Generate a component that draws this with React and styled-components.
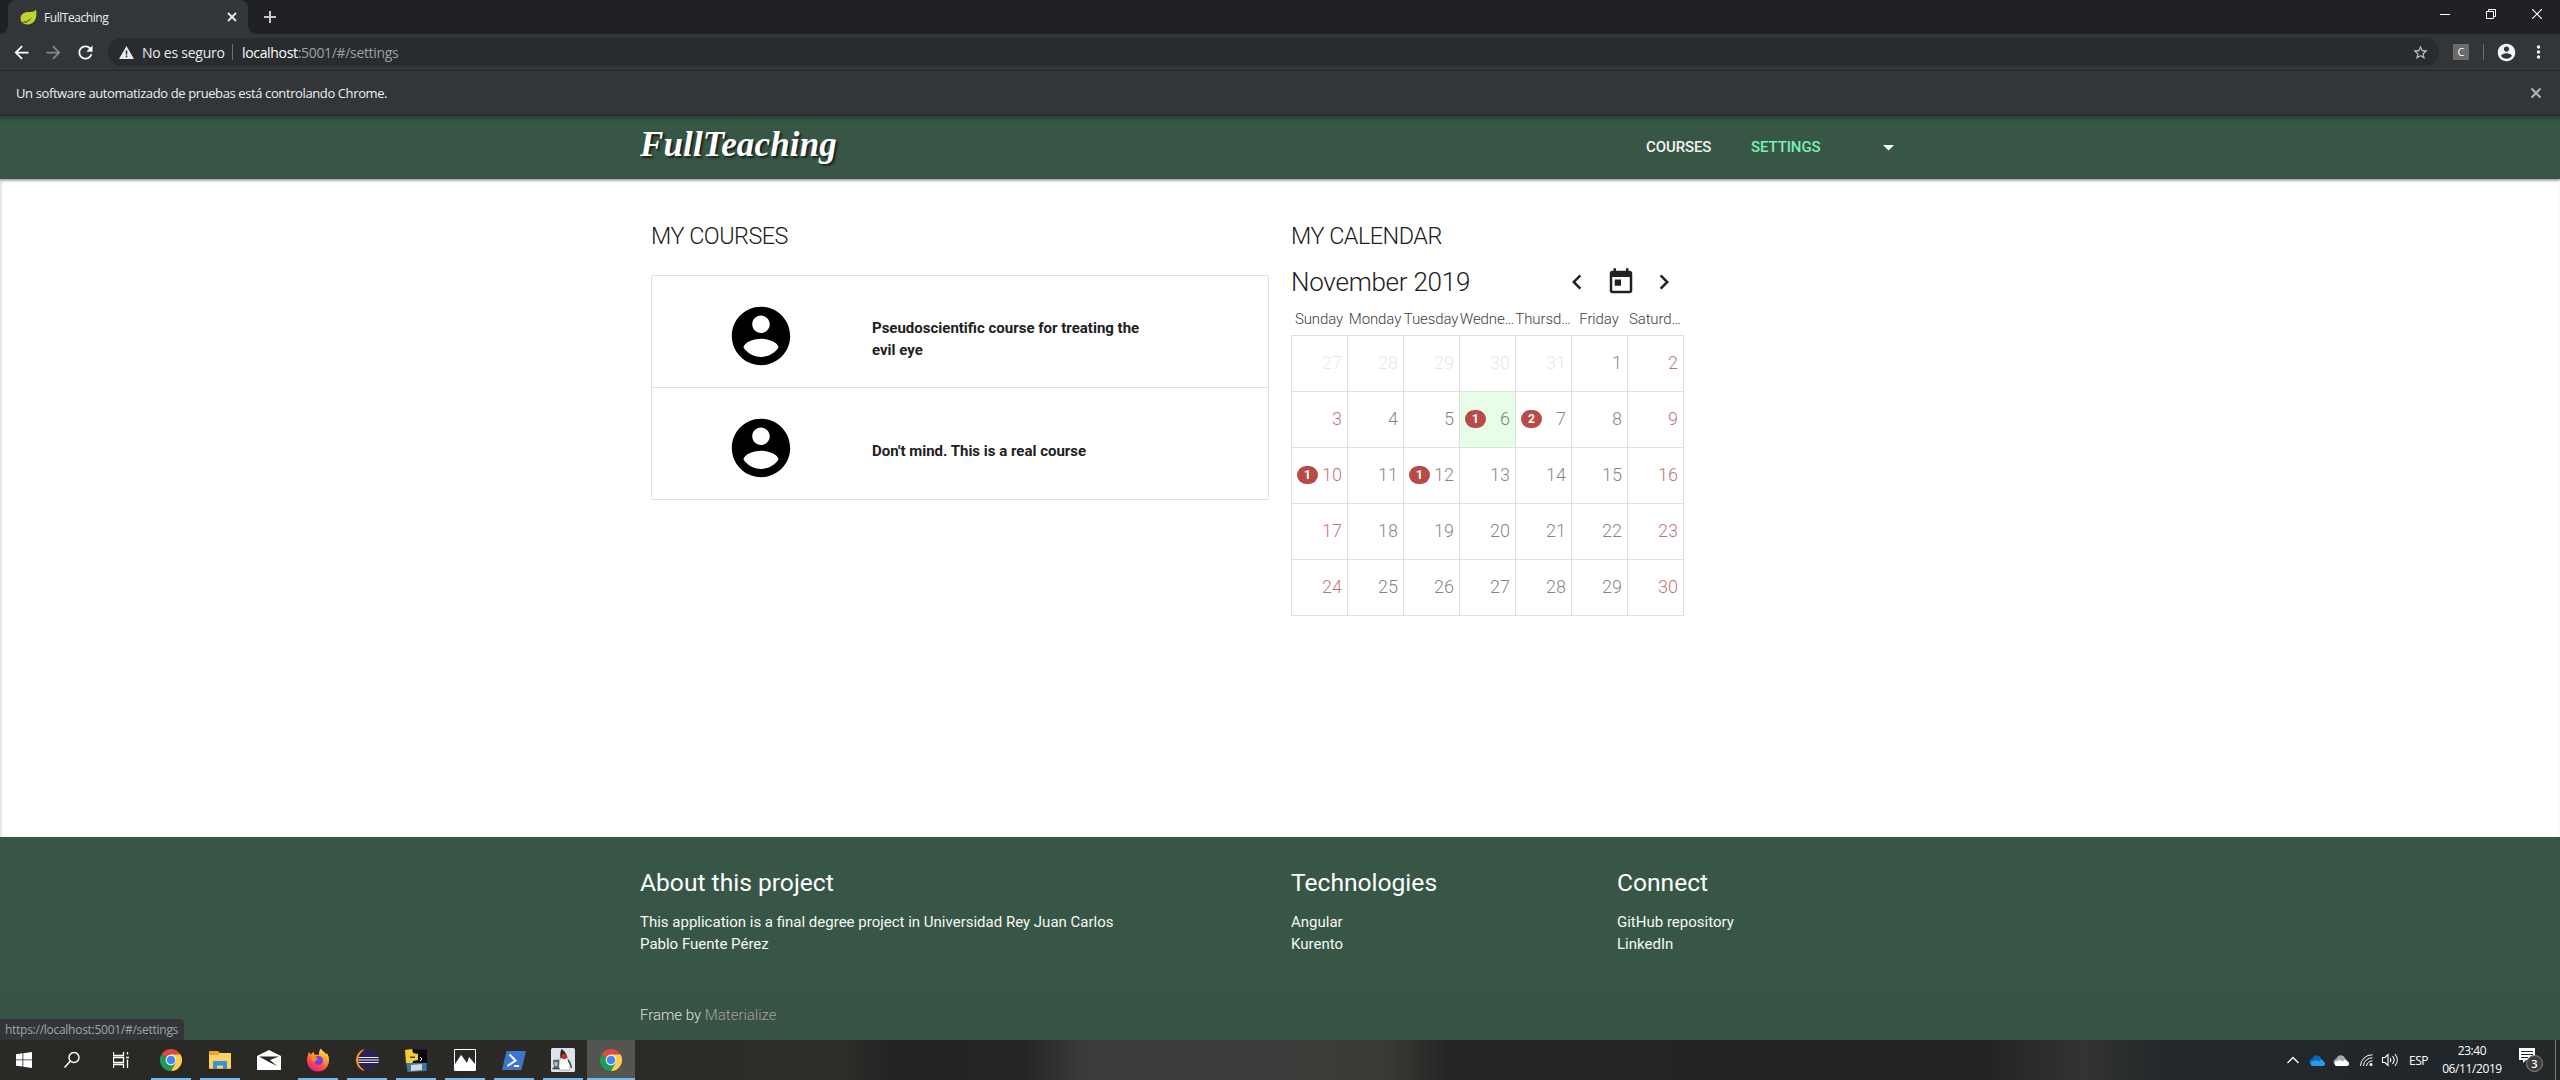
import React from "react";
import styled, { createGlobalStyle, css } from "styled-components";

const GlobalStyle = createGlobalStyle`
  * { box-sizing: border-box; }
  body { margin: 0; background: #fff; font-family: Roboto, sans-serif; }
  svg { display: block; flex: none; }
`;

const UI_FONT = `"Open Sans", "Noto Sans", sans-serif`;

const Screen = styled.div`
  width: 2560px;
  height: 1080px;
  display: flex;
  flex-direction: column;
  overflow: hidden;
  background: #fff;
`;

/* ---------- Browser chrome ---------- */

const TabStrip = styled.div`
  height: 34px;
  flex: none;
  background: #202124;
  display: flex;
  align-items: flex-start;
  padding-left: 8px;
`;

const Tab = styled.div`
  position: relative;
  width: 240px;
  height: 34px;
  display: flex;
  align-items: center;
  padding: 0 11px 0 12px;
  background: #323639;
  border-radius: 8px 8px 0 0;
  color: #eceef0;
  font: 12px ${UI_FONT};
  &::before, &::after {
    content: "";
    position: absolute;
    bottom: 0;
    width: 8px;
    height: 8px;
  }
  &::before { left: -8px; background: radial-gradient(circle at 0 0, #202124 7.5px, #323639 8px); }
  &::after { right: -8px; background: radial-gradient(circle at 100% 0, #202124 7.5px, #323639 8px); }
`;

const TabTitle = styled.span`
  flex: 1;
  margin-left: 7px;
  letter-spacing: -0.45px;
`;

const NewTab = styled.div`
  padding: 11px 0 0 16px;
`;

const WindowButtons = styled.div`
  margin-left: auto;
  display: flex;
  gap: 36px;
  padding: 9px 18px 0 0;
`;

const Toolbar = styled.div`
  height: 37px;
  flex: none;
  display: flex;
  align-items: center;
  background: #323639;
  border-bottom: 1px solid #25282a;
  padding: 0 16px 0 11px;
`;

const NavIcons = styled.div`
  display: flex;
  gap: 11px;
  margin-right: 12px;
`;

const AddressBar = styled.div`
  flex: 1;
  height: 28px;
  border-radius: 14px;
  background: #282c2f;
  display: flex;
  align-items: center;
  padding: 0 10px 0 11px;
  font: 14px ${UI_FONT};
  color: #e8eaed;
`;

const Insecure = styled.span`
  margin-left: 8px;
  width: 82px;
  letter-spacing: -0.25px;
  white-space: nowrap;
`;

const Bar = styled.span`
  width: 1px;
  height: 16px;
  background: #6b6f73;
  margin: 0 ${(p) => p.$right}px 0 ${(p) => p.$left}px;
`;

const Url = styled.span`
  flex: 1;
  letter-spacing: -0.33px;
  color: #9aa0a6;
  b { font-weight: 400; color: #fff; }
`;

const Extension = styled.span`
  width: 16px;
  height: 16px;
  margin-left: 14px;
  border-radius: 1px;
  background: #6b6b6b;
  color: #fff;
  font: 11px/16px ${UI_FONT};
  text-align: center;
`;

const InfoBar = styled.div`
  height: 45px;
  flex: none;
  display: flex;
  align-items: center;
  justify-content: space-between;
  background: #323639;
  border-bottom: 1px solid #2b2f31;
  padding: 0 18px 0 16px;
  color: #eceef0;
  font: 13px ${UI_FONT};
  letter-spacing: -0.39px;
`;

/* ---------- Page ---------- */

const Page = styled.div`
  height: 924px;
  flex: none;
  display: flex;
  flex-direction: column;
  box-shadow: inset 1px 0 3px rgba(0, 0, 0, 0.18);
`;

const NavBar = styled.nav`
  height: 63px;
  flex: none;
  background: linear-gradient(#2b4136, #385646 6px);
  box-shadow: 0 1px 3px rgba(0, 0, 0, 0.55);
`;

const Container = styled.div`
  width: 1280px;
  margin: 0 auto;
  display: flex;
`;

const NavContainer = styled(Container)`
  height: 63px;
  align-items: center;
`;

const Logo = styled.span`
  flex: 1;
  margin-top: -5px;
  color: #fff;
  font: italic 700 35px "Liberation Serif", serif;
  letter-spacing: 0.15px;
  text-shadow: 2px 2px 2px rgba(0, 0, 0, 0.6);
`;

const NavLink = styled.span`
  width: ${(p) => p.$width}px;
  padding-bottom: 2px;
  font-size: 15px;
  font-weight: 500;
  letter-spacing: -0.1px;
  color: ${(p) => (p.$active ? "#7af0b4" : "#f1f4f2")};
`;

const Main = styled(Container)`
  flex: 1;
  align-items: flex-start;
  padding-top: 44px;
`;

const CoursesColumn = styled.section`
  width: 640px;
  padding: 0 11px;
`;

const CalendarColumn = styled.section`
  width: 405px;
  padding-left: 11px;
`;

const Heading = styled.h5`
  margin: 0;
  height: ${(p) => p.$height}px;
  line-height: 27px;
  font-size: 23.4px;
  font-weight: 300;
  letter-spacing: -0.5px;
  color: #202020;
`;

const CourseList = styled.div`
  border: 1px solid #e0e0e0;
  border-radius: 2px;
  width: 618px;
`;

const CourseRow = styled.div`
  height: ${(p) => (p.$last ? 111 : 112)}px;
  display: flex;
  align-items: center;
  border-bottom: ${(p) => (p.$last ? 0 : 1)}px solid #e0e0e0;
  padding-left: 74px;
`;

const Avatar = styled.span`
  padding-top: 9px;
`;

const CourseTitle = styled.span`
  margin-left: 76px;
  width: 290px;
  padding-top: 14px;
  font-size: 15px;
  line-height: 22px;
  font-weight: 700;
  color: #212121;
`;

const MonthBar = styled.div`
  height: 45px;
  width: 393px;
  display: flex;
  align-items: center;
  color: #212121;
`;

const MonthName = styled.span`
  width: 271px;
  font-size: 26px;
  font-weight: 300;
  letter-spacing: -0.25px;
`;

const MonthIcon = styled.span`
  width: 43.5px;
`;

const WeekHeader = styled.div`
  display: grid;
  grid-template-columns: repeat(7, 56px);
  width: 393px;
  height: 31px;
  line-height: 31px;
  text-align: center;
  font-size: 15px;
  font-weight: 300;
  letter-spacing: -0.1px;
  white-space: nowrap;
  color: #404040;
`;

const Grid = styled.div`
  display: grid;
  grid-template-columns: repeat(7, 56px);
  grid-auto-rows: 56px;
  width: 393px;
  border: solid #e0e0e0;
  border-width: 1px 0 0 1px;
`;

const Day = styled.div`
  display: flex;
  align-items: center;
  justify-content: space-between;
  padding: 0 5px 2px;
  border: solid #e0e0e0;
  border-width: 0 1px 1px 0;
  background: ${(p) => (p.$today ? "#e8fde7" : "transparent")};
`;

const DayNumber = styled.span`
  margin-left: auto;
  font-size: 18px;
  font-weight: 300;
  color: ${(p) => (p.$weekend ? "#8b0000" : "#212121")};
  opacity: ${(p) => (p.$out ? 0.1 : 0.55)};
`;

const Badge = styled.span`
  width: 21px;
  height: 18px;
  border-radius: 10px;
  background: #b94a48;
  color: #fff;
  font-size: 12px;
  font-weight: 700;
  line-height: 18px;
  text-align: center;
`;

const Footer = styled.footer`
  height: 203px;
  flex: none;
  background: #385646;
  color: #fff;
`;

const FooterTop = styled(Container)`
  height: 153px;
  padding-top: 30px;
`;

const FooterColumn = styled.div`
  width: ${(p) => p.$width}px;
  h5 { margin: 0 0 13px; font-size: 24.6px; line-height: 31px; font-weight: 400; }
  p { margin: 0; font-size: 15px; line-height: 22px; color: #f6f8f6; }
`;

const Copyright = styled.div`
  height: 50px;
  background: #375345;
`;

const CopyrightText = styled(Container)`
  padding-top: 14px;
  font-size: 15px;
  line-height: 22px;
  font-weight: 300;
  color: rgba(255, 255, 255, 0.85);
  white-space: pre;
  span { color: #a8a297; }
`;

const StatusBubble = styled.div`
  position: absolute;
  left: 0;
  top: 1019px;
  width: 184px;
  height: 21px;
  padding-left: 5px;
  border-radius: 0 4px 0 0;
  background: #323639;
  color: #9fa4a9;
  font: 12px/21px ${UI_FONT};
  letter-spacing: -0.27px;
  white-space: nowrap;
`;

/* ---------- Taskbar ---------- */

const TaskBar = styled.div`
  height: 40px;
  flex: none;
  display: flex;
  color: #fff;
  background: linear-gradient(90deg, #292824 0, #2b2a26 640px, #2f2e2a 840px, #222324 890px,
    #232424 1019px, #3a3b3b 1085px, #3d3e3c 1261px, #3b3935 1388px, #252423 1450px,
    #222324 1987px, #333431 2082px, #23282b 2166px, #21262a 2450px, #262829 2560px);
`;

const TaskItem = styled.div`
  width: ${(p) => p.$width || 49}px;
  display: flex;
  align-items: center;
  justify-content: center;
  ${(p) => p.$open && css`
    background: linear-gradient(#76b9ed, #76b9ed) center bottom / ${p.$active ? 48 : 40}px 2px no-repeat
      ${p.$active ? ", #545450" : ""};
  `}
`;

const SearchHandle = styled.span`
  margin-right: -12px;
`;

const Tray = styled.div`
  margin-left: auto;
  width: 274px;
  display: flex;
  align-items: center;
  font: 12px ${UI_FONT};
`;

const TraySlot = styled.div`
  width: ${(p) => p.$width}px;
  display: flex;
  justify-content: center;
  letter-spacing: -0.5px;
`;

const Clock = styled.div`
  width: 66px;
  margin-left: -2px;
  text-align: center;
  line-height: 18px;
  letter-spacing: -0.4px;
`;

const Notifications = styled.div`
  width: 25px;
  margin-left: 13px;
`;

const ShowDesktop = styled.div`
  height: 40px;
  margin-left: auto;
  width: 5px;
  border-left: 1px solid #77797a;
`;

/* ---------- Icons ---------- */

const Stroke = ({ w, h = w, d, c = "#e8eaed", sw = 2 }) => (
  <svg width={w} height={h} viewBox={`0 0 ${w} ${h}`} fill="none" stroke={c} strokeWidth={sw}><path d={d} /></svg>
);

const Material = ({ size, d, c = "currentColor" }) => (
  <svg width={size} height={size} viewBox="0 0 24 24" fill={c}><path d={d} /></svg>
);

const ACCOUNT = "M12 2C6.48 2 2 6.48 2 12s4.48 10 10 10 10-4.48 10-10S17.52 2 12 2zm0 3c1.66 0 3 1.34 3 3s-1.34 3-3 3-3-1.34-3-3 1.34-3 3-3zm0 14.2c-2.5 0-4.71-1.28-6-3.22.03-1.99 4-3.08 6-3.08 1.99 0 5.97 1.09 6 3.08-1.29 1.94-3.5 3.22-6 3.22z";
const TODAY = "M19 3h-1V1h-2v2H8V1H6v2H5c-1.11 0-1.99.9-1.99 2L3 19c0 1.1.89 2 2 2h14c1.1 0 2-.9 2-2V5c0-1.1-.9-2-2-2zm0 16H5V8h14v11zM7 10h5v5H7z";
const REFRESH = "M17.65 6.35C16.2 4.9 14.21 4 12 4c-4.42 0-7.99 3.58-7.99 8s3.57 8 7.99 8c3.73 0 6.84-2.55 7.73-6h-2.08c-.82 2.33-3.04 4-5.65 4-3.31 0-6-2.69-6-6s2.69-6 6-6c1.66 0 3.14.69 4.22 1.78L13 11h7V4l-2.35 2.35z";
const ARROW_BACK = "M20 11H7.83l5.59-5.59L12 4l-8 8 8 8 1.41-1.41L7.83 13H20v-2z";
const ARROW_FORWARD = "M12 4l-1.41 1.41L16.17 11H4v2h12.17l-5.58 5.59L12 20l8-8z";
const STAR = "M22 9.24l-7.19-.62L12 2 9.19 8.63 2 9.24l5.46 4.73L5.82 21 12 17.27 18.18 21l-1.63-7.03L22 9.24zM12 15.4l-3.76 2.27 1-4.28-3.32-2.88 4.38-.38L12 6.1l1.71 4.04 4.38.38-3.32 2.88 1 4.28L12 15.4z";

const Leaf = () => (
  <svg width="17" height="16" viewBox="0 0 17 16">
    <path d="M16 .5c-1.500 2.500-4 2.400-8 2.600C3 3.500.6 6 .6 9.400c0 1.600.5 2.700 1.200 3.600 2.500-.1 6-.8 9.200-3.800-2 3.600-5.400 5-8.200 5.100 1.500 1 4 1.400 6.600.9C15 14.200 17.500 8 16 .5z" fill="#c4d12c" />
    <path d="M1.500 13.300c4 0 8-1.500 11-6-1.500 4.500-5.500 7-10 7.200z" fill="#5d9440" />
  </svg>
);

const Chrome = () => (
  <svg width="22" height="22" viewBox="0 0 22 22">
    <path d="M11 11L1.470 5.500A11 11 0 0 1 20.530 5.500z" fill="#dd4b3e" />
    <path d="M1.470 5.500A11 11 0 0 0 11 22L15.760 13.750 11 11z" fill="#1e9b55" />
    <path d="M15.760 13.750L11 22A11 11 0 0 0 20.530 5.500H11z" fill="#fdd04a" />
    <circle cx="11" cy="11" r="5.400" fill="#f1f3f2" />
    <circle cx="11" cy="11" r="4.300" fill="#4688f1" />
  </svg>
);

const Folder = () => (
  <svg width="22" height="18" viewBox="0 0 22 18">
    <path d="M0 0h9l2 2h11v16H0z" fill="#e8a823" />
    <path d="M0 4h9l2-2h11v15H0z" fill="#fbd266" />
    <path d="M4 18v-7l1-1h12l1 1v7h-4v-3.500H8V18z" fill="#3393dd" />
  </svg>
);

const Mail = () => (
  <svg width="24" height="20" viewBox="0 0 24 20">
    <path d="M0 6L12 0l12 6v14H0z" fill="#fff" />
    <path d="M2 6.500h20l-9 3.500 7 6-9-4.500z" fill="#292824" />
  </svg>
);

const Firefox = () => (
  <svg width="24" height="24" viewBox="0 0 24 24">
    <defs>
      <linearGradient id="ff" x1=".8" y1="0" x2=".3" y2="1">
        <stop offset="0" stopColor="#fff04a" /><stop offset=".4" stopColor="#ff9a2a" />
        <stop offset=".75" stopColor="#ff3d50" /><stop offset="1" stopColor="#e0209a" />
      </linearGradient>
    </defs>
    <path d="M15 .5c1 2.500 4 3.500 5 6 1-.5.500-2 .5-2 2 2.500 2.500 5 2.500 8C23 19 18 23.500 12 23.500S1 19 1 12.500C1 9 2.500 7 2.500 4c1 .5 2 2 2.500 2.500.7-1.500 2-2.500 3-2.500-.5 1 0 2 .5 2.500L13 7c-.5-2.500.5-5 2-6.500z" fill="url(#ff)" />
    <circle cx="12.500" cy="12.500" r="4.500" fill="#7a3fe0" />
    <path d="M5 9c2.500-1 5 0 7 2-1 2-3 1-3.500 3 0 0-3.500-1-3.500-5z" fill="#ff8a2a" />
  </svg>
);

const Eclipse = () => (
  <svg width="24" height="22" viewBox="0 0 24 22">
    <path d="M10 0A11.200 11.200 0 0 0 10 22 14 14 0 0 1 10 0z" fill="#f7941e" />
    <circle cx="13.300" cy="11" r="10.300" fill="#2c2255" />
    <path d="M3.500 8.500h20M3 11h21M3.500 13.500h20" stroke="#f1f0f6" strokeWidth="1.200" />
  </svg>
);

const PythonDisk = () => (
  <svg width="22" height="23" viewBox="0 0 22 23">
    <path d="M1 12l21-4-.5 14-19 1z" fill="#347aa8" />
    <path d="M8 .5h14V14H8z" fill="#0a0a0a" />
    <path d="M0 1l7-1 1 4 5 1v6l-5 1-1 2H1z" fill="#f5cf2f" />
    <path d="M5 7.500h5v1.500H5z" fill="#4f4516" />
    <path d="M15 8l2 2-2 2" fill="none" stroke="#fff" />
    <path d="M6 16l11-1v6l-11 1z" fill="#d4d6d8" />
  </svg>
);

const Photos = () => (
  <svg width="22" height="22" viewBox="0 0 22 22">
    <path d="M.5.500h21v21H.5z" fill="#292824" stroke="#fff" />
    <path d="M1 15l6-9 1 1 5 7 2-6 1 1 5 6v6H1z" fill="#fff" />
  </svg>
);

const PowerShell = () => (
  <svg width="24" height="19" viewBox="0 0 24 19">
    <path d="M4.500 0H24l-4.500 19H0z" fill="#3f74cc" />
    <path d="M7.500 3.500l6 6-8 5.500M12 15h5" fill="none" stroke="#fff" strokeWidth="2" />
  </svg>
);

const Duke = () => (
  <svg width="24" height="24" viewBox="0 0 24 24">
    <rect width="24" height="24" rx="1.500" fill="#dde3ea" />
    <path d="M10.500 1c2 1 5 4 6 9l-7 1c-.8-4 0-8 1-10z" fill="#26282b" />
    <path d="M9.500 10h7c1.500 4 3 8 2 12H8c-.5-4 0-8 1.500-12z" fill="#fdfdfd" stroke="#8d9197" strokeWidth=".6" />
    <path d="M2 12l6-.5v8l-5 .5z" fill="#5d666f" />
    <path d="M3.500 14h3v4h-3z" fill="#b7c0c8" />
    <path d="M1.500 20.500h7M17 12c2 2 3 5 3.500 8" fill="none" stroke="#3a3d40" strokeWidth="1.300" />
    <circle cx="13" cy="8.500" r="2.700" fill="#d92a20" />
  </svg>
);

const Cloud = ({ a, b }) => (
  <svg width="16" height="11" viewBox="0 0 16 11">
    <path d="M1 8.500a3.500 3.500 0 0 1 2.500-5A4.500 4.500 0 0 1 12 3l1 2-9 5z" fill={a} />
    <path d="M3 11a2.800 2.800 0 0 1-.5-4.500L7 5l3 1.500c1-2.500 4-2 4.500 0A2.300 2.300 0 0 1 14 11z" fill={b} />
  </svg>
);

/* ---------- Data ---------- */

const WEEKDAYS = ["Sunday", "Monday", "Tuesday", "Wedne…", "Thursd…", "Friday", "Saturd…"];
const DAYS = [27, 28, 29, 30, 31, ...Array.from({ length: 30 }, (_, i) => i + 1)];
const EVENTS = { 6: 1, 7: 2, 10: 1, 12: 1 };
const TASKS = [Chrome, Folder, Mail, Firefox, Eclipse, PythonDisk, Photos, PowerShell, Duke];

export default function App() {
  return (
    <Screen>
      <GlobalStyle />
      <TabStrip>
        <Tab>
          <Leaf />
          <TabTitle>FullTeaching</TabTitle>
          <Stroke w={10} d="M1 1l8 8M9 1l-8 8" sw={1.8} />
        </Tab>
        <NewTab><Stroke w={12} d="M6 0v12M0 6h12" c="#c6c9cc" /></NewTab>
        <WindowButtons>
          <Stroke w={10} d="M0 5.500h10" c="#fff" sw={1} />
          <Stroke w={10} d="M.5 2.500h7v7h-7zM2.500 2.500v-2h7v7h-2" c="#fff" sw={1} />
          <Stroke w={10} d="M0 0l10 10M10 0L0 10" c="#fff" sw={1.100} />
        </WindowButtons>
      </TabStrip>

      <Toolbar>
        <NavIcons>
          <Material size={21} d={ARROW_BACK} c="#fff" />
          <Material size={21} d={ARROW_FORWARD} c="#85888b" />
          <Material size={21} d={REFRESH} c="#fff" />
        </NavIcons>
        <AddressBar>
          <svg width="15" height="13" viewBox="0 0 15 13">
            <path d="M7.500 0L15 13H0z" fill="#e8eaed" />
            <path d="M7.500 4.500v4M7.500 9.500v1.700" stroke="#282c2f" strokeWidth="1.500" />
          </svg>
          <Insecure>No es seguro</Insecure>
          <Bar $left={8} $right={9} />
          <Url><b>localhost</b>:5001/#/settings</Url>
          <Material size={17} d={STAR} c="#c3c6c9" />
        </AddressBar>
        <Extension>C</Extension>
        <Bar $left={14} $right={12} />
        <Material size={21} d={ACCOUNT} c="#f1f3f4" />
        <svg width="27" height="14" viewBox="0 0 27 14" fill="#f1f3f4">
          <circle cx="21.500" cy="2" r="1.700" /><circle cx="21.500" cy="7" r="1.700" /><circle cx="21.500" cy="12" r="1.700" />
        </svg>
      </Toolbar>

      <InfoBar>
        Un software automatizado de pruebas está controlando Chrome.
        <Stroke w={12} d="M1.500 1.500l9 9M10.500 1.500l-9 9" c="#b4b7ba" />
      </InfoBar>

      <Page>
        <NavBar>
          <NavContainer>
            <Logo>FullTeaching</Logo>
            <NavLink $width={105}>COURSES</NavLink>
            <NavLink $width={132} $active>SETTINGS</NavLink>
            <svg width="37" height="6" viewBox="0 0 37 6"><path d="M0 0h11L5.500 5.500z" fill="#fff" /></svg>
          </NavContainer>
        </NavBar>

        <Main>
          <CoursesColumn>
            <Heading $height={52}>MY COURSES</Heading>
            <CourseList>
              <CourseRow>
                <Avatar><Material size={70} d={ACCOUNT} c="#000" /></Avatar>
                <CourseTitle>Pseudoscientific course for treating the evil eye</CourseTitle>
              </CourseRow>
              <CourseRow $last>
                <Avatar><Material size={70} d={ACCOUNT} c="#000" /></Avatar>
                <CourseTitle>Don't mind. This is a real course</CourseTitle>
              </CourseRow>
            </CourseList>
          </CoursesColumn>

          <CalendarColumn>
            <Heading $height={36}>MY CALENDAR</Heading>
            <MonthBar>
              <MonthName>November 2019</MonthName>
              <MonthIcon><Material size={30} d="M15.410 7.410L14 6l-6 6 6 6 1.410-1.410L10.830 12z" /></MonthIcon>
              <MonthIcon><Material size={30} d={TODAY} /></MonthIcon>
              <Material size={30} d="M10 6L8.590 7.410 13.170 12l-4.580 4.590L10 18l6-6z" />
            </MonthBar>
            <WeekHeader>{WEEKDAYS.map((d) => <span key={d}>{d}</span>)}</WeekHeader>
            <Grid>
              {DAYS.map((n, i) => {
                const out = i < 5;
                return (
                  <Day key={i} $today={!out && n === 6}>
                    {!out && EVENTS[n] && <Badge>{EVENTS[n]}</Badge>}
                    <DayNumber $out={out} $weekend={i % 7 === 0 || i % 7 === 6}>{n}</DayNumber>
                  </Day>
                );
              })}
            </Grid>
          </CalendarColumn>
        </Main>

        <Footer>
          <FooterTop>
            <FooterColumn $width={651}>
              <h5>About this project</h5>
              <p>This application is a final degree project in Universidad Rey Juan Carlos</p>
              <p>Pablo Fuente Pérez</p>
            </FooterColumn>
            <FooterColumn $width={326}>
              <h5>Technologies</h5>
              <p>Angular</p>
              <p>Kurento</p>
            </FooterColumn>
            <FooterColumn $width={300}>
              <h5>Connect</h5>
              <p>GitHub repository</p>
              <p>LinkedIn</p>
            </FooterColumn>
          </FooterTop>
          <Copyright>
            <CopyrightText>Frame by <span>Materialize</span></CopyrightText>
          </Copyright>
        </Footer>
      </Page>
      <StatusBubble>https://localhost:5001/#/settings</StatusBubble>

      <TaskBar>
        <TaskItem $width={48}>
          <svg width="16" height="16" viewBox="0 0 16 16" fill="#fff">
            <path d="M0 2.200L6.500 1.300v6.200H0zM7.300 1.200L16 0v7.500H7.300zM0 8.300h6.500v6.200L0 13.700zM7.300 8.300H16V16l-8.700-1.300z" />
          </svg>
        </TaskItem>
        <TaskItem $width={48}>
          <SearchHandle><Stroke w={16} d="M.5 15.500l6-6.500" c="#fff" sw={1.500} /></SearchHandle>
          <svg width="12" height="16" viewBox="0 0 12 16"><circle cx="6" cy="5.500" r="5" fill="none" stroke="#fff" strokeWidth="1.400" /></svg>
        </TaskItem>
        <TaskItem $width={50}>
          <Stroke w={16} d="M.5 0v3.500h10V0M.5 16v-3.500h10V16M.5 5.500h10v5H.5zM14.500 0v2.500M14.500 7.500V16M13 5.500h3" c="#fff" sw={1.300} />
        </TaskItem>
        {TASKS.map((Icon, i) => (
          <TaskItem key={i} $open={i !== 2}><Icon /></TaskItem>
        ))}
        <TaskItem $width={48} $open $active><Chrome /></TaskItem>

        <Tray>
          <TraySlot $width={14}><Stroke w={12} h={8} d="M.5 7L6 1.500 11.500 7" c="#fff" sw={1.300} /></TraySlot>
          <TraySlot $width={34}><Cloud a="#0a64b8" b="#2a9be8" /></TraySlot>
          <TraySlot $width={14}><Cloud a="#a9abad" b="#fff" /></TraySlot>
          <TraySlot $width={36}>
            <svg width="13" height="12" viewBox="0 0 13 12" fill="none" stroke="#fff">
              <path d="M.5 12A11.500 11.500 0 0 1 12.500.8M3.500 12A8.500 8.500 0 0 1 12.500 3.800M6.500 12A6 6 0 0 1 12.500 6.800" />
              <circle cx="11" cy="10.500" r="1.500" fill="#fff" stroke="none" />
            </svg>
          </TraySlot>
          <TraySlot $width={12}>
            <Stroke w={17} h={14} d="M.5 4.500h2.500l3-3v11l-3-3H.5zM8 5c1 1.200 1 2.800 0 4M10.500 3c2 2.400 2 5.600 0 8M13 1c3 3.600 3 8.400 0 12" c="#fff" sw={1.100} />
          </TraySlot>
          <TraySlot $width={45}>ESP</TraySlot>
          <Clock>23:40<br />06/11/2019</Clock>
          <Notifications>
            <svg width="26" height="26" viewBox="0 0 26 26">
              <path d="M1 1h16v12H8l-3 3v-3H1z" fill="#fff" />
              <path d="M3 4.500h12M3 7.500h12M3 10.500h7" stroke="#262829" />
              <circle cx="16.500" cy="16.500" r="8" fill="#3b3d3e" stroke="#8b8d8e" />
              <text x="16.500" y="20.500" textAnchor="middle" fill="#fff" fontSize="11" fontWeight="600" fontFamily="Open Sans">3</text>
            </svg>
          </Notifications>
          <ShowDesktop />
        </Tray>
      </TaskBar>
    </Screen>
  );
}
